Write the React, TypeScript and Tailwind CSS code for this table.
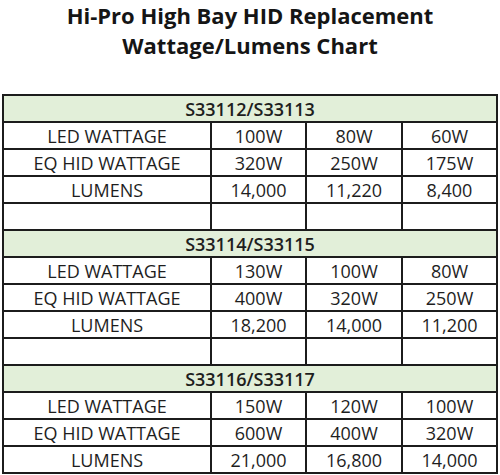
import React from "react";

type Section = { title: string; rows: [string, string, string, string][]; blank: boolean };

const sections: Section[] = [
  {
    title: "S33112/S33113",
    rows: [
      ["LED WATTAGE", "100W", "80W", "60W"],
      ["EQ HID WATTAGE", "320W", "250W", "175W"],
      ["LUMENS", "14,000", "11,220", "8,400"],
    ],
    blank: true,
  },
  {
    title: "S33114/S33115",
    rows: [
      ["LED WATTAGE", "130W", "100W", "80W"],
      ["EQ HID WATTAGE", "400W", "320W", "250W"],
      ["LUMENS", "18,200", "14,000", "11,200"],
    ],
    blank: true,
  },
  {
    title: "S33116/S33117",
    rows: [
      ["LED WATTAGE", "150W", "120W", "100W"],
      ["EQ HID WATTAGE", "600W", "400W", "320W"],
      ["LUMENS", "21,000", "16,800", "14,000"],
    ],
    blank: false,
  },
];

function Row({ cells }: { cells: string[] }) {
  return (
    <div className="grid grid-cols-[208px_95px_96px_1fr] h-[27px] border-b-2 border-[#1c1c1c]">
      {cells.map((c, i) => (
        <div
          key={i}
          className={
            "flex items-center justify-center text-[18px] leading-none text-[#1e1e1e] " +
            (i < 3 ? "border-r-2 border-[#1c1c1c]" : "")
          }
        >
          {c}
        </div>
      ))}
    </div>
  );
}

export default function App() {
  return (
    <div
      className="w-[500px] h-[475px] bg-white overflow-hidden"
      style={{ fontFamily: '"Open Sans", "Noto Sans", sans-serif' }}
    >
      <div className="h-[94px] pt-[2px]">
        <div className="flex flex-col items-center gap-[4px] text-[22px] font-bold leading-[26px] text-[#151515]">
          <div>Hi-Pro High Bay HID Replacement</div>
          <div>Wattage/Lumens Chart</div>
        </div>
      </div>
      <div className="ml-[2px] w-[496px] border-t-2 border-l-2 border-r-2 border-[#1c1c1c]">
        {sections.map((s) => (
          <div key={s.title}>
            <div className="h-[27px] border-b-2 border-[#1c1c1c] bg-[#e2efd9] flex items-center justify-center text-[18px] font-semibold leading-none text-[#1e1e1e]">
              {s.title}
            </div>
            {s.rows.map((r, i) => (
              <Row key={i} cells={r} />
            ))}
            {s.blank && <Row cells={["", "", "", ""]} />}
          </div>
        ))}
      </div>
    </div>
  );
}
